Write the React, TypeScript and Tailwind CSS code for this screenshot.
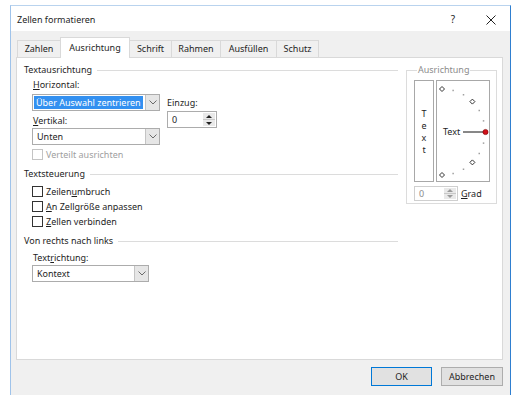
import React from "react";

const ink = "text-[#1e1e1e]";

function Chevron() {
  return (
    <svg width="8" height="5" viewBox="0 0 8 5">
      <polyline points="0.5,0.5 4,4 7.5,0.5" fill="none" stroke="#6a6a6a" strokeWidth="1" />
    </svg>
  );
}

function Dropdown({ text, className, selected }: { text: string; className: string; selected?: boolean }) {
  return (
    <div className={`flex h-[17px] border border-[#acacac] bg-white ${className}`}>
      <div className="flex flex-1 items-center pl-[1px] pr-[2px]">
        {selected ? (
          <span className="block h-[13px] w-full bg-[#3390f0] px-[2px] leading-[13px] text-white">{text}</span>
        ) : (
          <span className={`px-[3px] leading-[15px] ${ink}`}>{text}</span>
        )}
      </div>
      <div className="flex w-[14px] items-center justify-center border-l border-[#c4c4c4] bg-[#e6e6e6]">
        <Chevron />
      </div>
    </div>
  );
}

function SpinButtons({ color }: { color: string }) {
  return (
    <div className="my-[1px] mr-[1px] flex w-[12px] flex-col bg-[#e9e9e9]">
      <div className="flex flex-1 items-center justify-center border-b border-[#c8c8c8]">
        <svg width="6" height="3" viewBox="0 0 6 3">
          <polygon points="0,3 3,0 6,3" fill={color} />
        </svg>
      </div>
      <div className="flex flex-1 items-center justify-center">
        <svg width="6" height="3" viewBox="0 0 6 3">
          <polygon points="0,0 6,0 3,3" fill={color} />
        </svg>
      </div>
    </div>
  );
}

function Header({ text }: { text: string }) {
  return (
    <div className="flex h-[14px] items-center">
      <span className={ink}>{text}</span>
      <div className="ml-[5px] h-px flex-1 bg-[#dcdcdc]" />
    </div>
  );
}

function Check({ children, disabled }: { children: React.ReactNode; disabled?: boolean }) {
  return (
    <div className="flex h-[15px] items-center">
      <div
        className={`h-[11px] w-[11px] border bg-white ${disabled ? "border-[#c4c4c4]" : "border-[#333333]"}`}
      />
      <span className={`ml-[3px] ${disabled ? "text-[#a0a0a0]" : ink}`}>{children}</span>
    </div>
  );
}

function Dial() {
  const cx = 5;
  const cy = 51;
  const r = 43;
  const pt = (deg: number) => {
    const a = (deg * Math.PI) / 180;
    return [cx + r * Math.cos(a), cy - r * Math.sin(a)];
  };
  const diamonds = [90, 45, -45, -90];
  const dots = [75, 60, 30, 15, -15, -30, -60, -75];
  return (
    <svg width="52" height="100" viewBox="0 0 52 100">
      {dots.map((d) => {
        const [x, y] = pt(d);
        return <rect key={d} x={x - 0.75} y={y - 0.75} width="1.5" height="1.5" fill="#a0a0a0" />;
      })}
      {diamonds.map((d) => {
        const [x, y] = pt(d);
        return (
          <polygon
            key={d}
            points={`${x},${y - 2.5} ${x + 2.5},${y} ${x},${y + 2.5} ${x - 2.5},${y}`}
            fill="white"
            stroke="#333"
            strokeWidth="1"
          />
        );
      })}
      <text x="6" y="54" fontSize="9" fontFamily="Noto Sans, sans-serif" fill="#1e1e1e">
        Text
      </text>
      <line x1="26" y1="51" x2="47" y2="51" stroke="#111" strokeWidth="1" />
      <circle cx="48.5" cy="51" r="2.6" fill="#d0101a" stroke="#7a0000" strokeWidth="0.6" />
    </svg>
  );
}

const tabs = [
  { label: "Zahlen", w: "w-[44px]" },
  { label: "Ausrichtung", w: "w-[70px]" },
  { label: "Schrift", w: "w-[43px]" },
  { label: "Rahmen", w: "w-[50px]" },
  { label: "Ausfüllen", w: "w-[57px]" },
  { label: "Schutz", w: "w-[43px]" },
];

export default function App() {
  return (
    <div className="h-[395px] w-[513px] overflow-hidden bg-white pl-[10px] pt-[5px] font-['Noto_Sans',sans-serif] text-[9px]">
      <div className="flex h-[395px] w-[501px] flex-col border-l border-r border-t border-l-[#9fc3ea] border-r-[#2f7fd0] border-t-[#b9d3ee]">
        {/* title bar */}
        <div className="flex h-[25px] items-center bg-white pl-[6px] pt-[2px]">
          <span className={`flex-1 ${ink}`}>Zellen formatieren</span>
          <span className={`w-[12px] text-center text-[10px] ${ink}`}>?</span>
          <svg className="ml-[27px] mr-[14px]" width="10" height="10" viewBox="0 0 10 10">
            <path d="M0.5 0.5 L9.5 9.5 M9.5 0.5 L0.5 9.5" stroke="#222" strokeWidth="1" />
          </svg>
        </div>

        {/* body */}
        <div className="flex flex-1 flex-col bg-[#f0f0f0] pl-[5px] pr-[7px]">
          <div className="flex h-[26px] items-end pl-[1px]">
            {tabs.map((t, i) => {
              const sel = i === 1;
              return (
                <div
                  key={t.label}
                  className={`flex items-center justify-center border-l border-r border-t border-[#d9d9d9] ${t.w} ${
                    i > 0 ? "-ml-px" : ""
                  } ${sel ? "relative z-10 -mb-px h-[21px] bg-white" : "h-[17px] bg-[#f0f0f0]"} ${ink}`}
                >
                  {t.label}
                </div>
              );
            })}
          </div>

          {/* panel */}
          <div className="flex h-[303px] border border-[#d9d9d9] bg-white pl-[7px] pt-[5px]">
            <div className="flex w-[374px] flex-col">
              <Header text="Textausrichtung" />
              <div className="mt-[1px] flex pl-[8px]">
                <div className="flex w-[128px] flex-col">
                  <div className={`h-[14px] pl-[1px] leading-[14px] ${ink}`}>
                    <u>H</u>orizontal:
                  </div>
                  <Dropdown text="Über Auswahl zentrieren" className="mt-[2px] w-[128px]" selected />
                  <div className={`mt-[3px] h-[14px] pl-[1px] leading-[14px] ${ink}`}>
                    <u>V</u>ertikal:
                  </div>
                  <Dropdown text="Unten" className="w-[128px]" />
                  <div className="mt-[2px]">
                    <Check disabled>Verteilt ausrichten</Check>
                  </div>
                </div>
                <div className="ml-[7px] flex flex-col pt-[18px]">
                  <div className={`h-[14px] leading-[14px] ${ink}`}>Einzug:</div>
                  <div className="mt-[1px] flex h-[17px] w-[50px] border border-[#acacac] bg-white">
                    <span className={`flex-1 pl-[4px] leading-[15px] ${ink}`}>0</span>
                    <SpinButtons color="#222" />
                  </div>
                </div>
              </div>

              <div className="mt-[5px]">
                <Header text="Textsteuerung" />
              </div>
              <div className="mt-[3px] flex flex-col pl-[8px]">
                <Check>
                  Zeilen<u>u</u>mbruch
                </Check>
                <Check>
                  <u>A</u>n Zellgröße anpassen
                </Check>
                <Check>
                  <u>Z</u>ellen verbinden
                </Check>
              </div>

              <div className="mt-[5px]">
                <Header text="Von rechts nach links" />
              </div>
              <div className="mt-[3px] flex flex-col pl-[8px]">
                <div className={`h-[14px] pl-[1px] leading-[14px] ${ink}`}>
                  Text<u>r</u>ichtung:
                </div>
                <Dropdown text="Kontext" className="w-[117px]" />
              </div>
            </div>

            {/* orientation group */}
            <fieldset className="ml-[8px] h-[141px] w-[91px] border border-[#dcdcdc] pl-[7px]">
              <legend className="ml-[3px] px-[1px] leading-[14px] text-[#8c8c8c]">Ausrichtung</legend>
              <div className="mt-[3px] flex gap-[2px]">
                <div className="flex h-[102px] w-[20px] flex-col items-center justify-center gap-[1px] border border-[#a8a8a8]">
                  <span className={`block h-[11px] leading-[11px] ${ink}`}>T</span>
                  <span className={`block h-[11px] leading-[11px] ${ink}`}>e</span>
                  <span className={`block h-[11px] leading-[11px] ${ink}`}>x</span>
                  <span className={`block h-[11px] leading-[11px] ${ink}`}>t</span>
                </div>
                <div className="h-[102px] w-[54px] border border-[#a8a8a8]">
                  <Dial />
                </div>
              </div>
              <div className="mt-[4px] flex items-center">
                <div className="flex h-[15px] w-[44px] border border-[#cfcfcf] bg-white">
                  <span className="flex-1 pl-[4px] leading-[13px] text-[#8c8c8c]">0</span>
                  <SpinButtons color="#9a9a9a" />
                </div>
                <span className={`ml-[3px] ${ink}`}>
                  <u>G</u>rad
                </span>
              </div>
            </fieldset>
          </div>

          {/* buttons */}
          <div className="mt-[7px] flex justify-end gap-[9px]">
            <div className={`flex h-[19px] w-[61px] items-center justify-center border border-[#0078d7] bg-[#e1e1e1] ${ink}`}>
              OK
            </div>
            <div className={`flex h-[19px] w-[62px] items-center justify-center border border-[#adadad] bg-[#e1e1e1] ${ink}`}>
              Abbrechen
            </div>
          </div>
        </div>
      </div>
    </div>
  );
}
